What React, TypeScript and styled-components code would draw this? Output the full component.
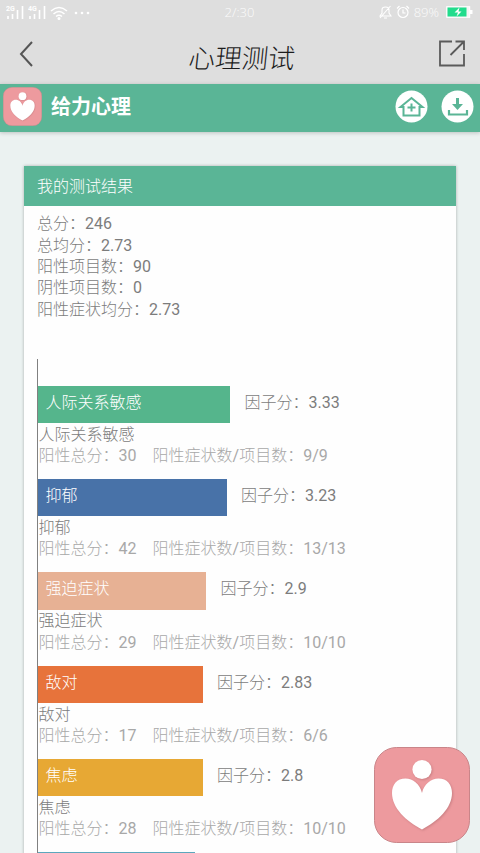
import React from "react";
import styled, { createGlobalStyle } from "styled-components";

const GlobalStyle = createGlobalStyle`
  * { box-sizing: border-box; }
  html, body { margin: 0; padding: 0; overflow: hidden; }
  body { font-family: Roboto, "Noto Sans CJK SC", sans-serif; font-size: 16px; line-height: 21.33px; color: #7c7c7c; font-weight: 300; }
`;

const Screen = styled.div`
  width: 480px;
  height: 853px;
  overflow: hidden;
  position: relative;
  background: #ebf2f1;
  display: flex;
  flex-direction: column;
`;

const StatusBar = styled.div`
  height: 25px;
  flex: none;
  display: grid;
  grid-template-columns: 1fr auto 1fr;
  align-items: center;
  padding: 0 7px 0 6px;
  background: #dedede;
  color: #fbfbfb;
`;

const StatusGroup = styled.div<{ $end?: boolean }>`
  display: flex;
  align-items: center;
  justify-content: ${(p) => (p.$end ? "flex-end" : "flex-start")};
  gap: 4px;
`;

const StatusText = styled.span<{ $gap?: number }>`
  font-family: "Open Sans", sans-serif;
  font-weight: 300;
  font-size: 13px;
  margin-right: ${(p) => p.$gap ?? 0}px;
`;

const TitleBar = styled.header`
  height: 58.5px;
  flex: none;
  display: flex;
  align-items: center;
  justify-content: space-between;
  padding: 0 14px 0 18px;
  background: #dedede;
`;

const Title = styled.h1`
  margin: 5px 0 0 11px;
  font-family: "Noto Sans CJK SC", sans-serif;
  font-size: 26.5px;
  line-height: 32px;
  font-weight: 300;
  color: #1c1c1c;
  transform: skewX(-6deg);
`;

const BrandBar = styled.div`
  height: 48px;
  flex: none;
  display: flex;
  align-items: center;
  padding: 0 6.5px 1.5px 3px;
  background: #5ab596;
  box-shadow: 0 1px 4px rgba(0, 0, 0, 0.2);
`;

const BrandName = styled.div`
  flex: 1;
  margin: 2px 0 0 9px;
  font-size: 20px;
  font-weight: 700;
  color: #fff;
`;

const Actions = styled.div`
  display: flex;
  gap: 13px;
`;

const Card = styled.main`
  flex: none;
  width: 432px;
  height: 740px;
  margin: 34.5px 0 0 24px;
  background: #fefefe;
  box-shadow: 0 0 3px rgba(0, 0, 0, 0.28);
`;

const CardTitle = styled.div`
  height: 40px;
  padding: 10px 13px;
  background: #5ab596;
  color: #fff;
`;

const Summary = styled.div`
  padding: 7.2px 13px 0;
`;

const Num = styled.span`
  font-weight: 400;
`;

const Chart = styled.section`
  margin: 39.3px 13px 0;
  padding-top: 26.5px;
  border-left: 1.4px solid #808080;
  height: 520px;
`;

const Factor = styled.article`
  height: 93.33px;
`;

const BarRow = styled.div`
  display: flex;
  height: 37.33px;
  line-height: 33.6px;
`;

const Bar = styled.div<{ $width: number; $color: string }>`
  width: ${(p) => p.$width}px;
  background: ${(p) => p.$color};
  padding-left: 7.5px;
  margin-right: 14.5px;
  color: #fff;
`;

const FactorName = styled.div`
  padding: 0.8px 0 0 0.6px;
`;

const Detail = styled.div`
  display: flex;
  gap: 16px;
  padding-left: 0.6px;
  color: #a8a8a8;
`;

const FloatingLogo = styled.div`
  position: absolute;
  left: 374px;
  top: 747px;
  width: 96px;
  height: 96px;
`;

const Drawing = styled.svg`
  display: block;
  flex: none;
`;

const LogoMark = styled.g`
  fill: #fff;
  filter: drop-shadow(1px 1px 1px rgba(168, 101, 105, 0.5));
`;

function Logo({ size }: { size: number }) {
  return (
    <Drawing width={size} height={size} viewBox="0 0 96 96">
      <rect x=".5" y=".5" width="95" height="95" rx="22" fill="#ed9a9e" stroke="#c98589" />
      <LogoMark>
        <circle cx="48" cy="22.5" r="9.6" />
        <path d="M48 46C46 37 39 31.5 31.5 31.5C23 31.5 18 37.5 18 46C18 61 32 74 48 82.5C64 74 78 61 78 46C78 37.5 73 31.5 64.5 31.5C57 31.5 50 37 48 46Z" />
      </LogoMark>
    </Drawing>
  );
}

function Signal({ label }: { label: string }) {
  return (
    <Drawing width="18" height="15" viewBox="0 0 18 15">
      <text x="0" y="6" fontSize="7" fontWeight="700" fontFamily="Roboto" fill="#fff">{label}</text>
      <path d="M2 11V14M6.5 9V14M11.5 5V14M16.500 1V14" stroke="#fff" strokeWidth="1.600" />
    </Drawing>
  );
}

const summary = [
  { label: "总分", value: "246" },
  { label: "总均分", value: "2.73" },
  { label: "阳性项目数", value: "90" },
  { label: "阴性项目数", value: "0" },
  { label: "阳性症状均分", value: "2.73" },
];

const factors = [
  { name: "人际关系敏感", width: 192, color: "#55b58c", score: "3.33", total: 30, ratio: "9/9" },
  { name: "抑郁", width: 188.5, color: "#4872a8", score: "3.23", total: 42, ratio: "13/13" },
  { name: "强迫症状", width: 168, color: "#e7b194", score: "2.9", total: 29, ratio: "10/10" },
  { name: "敌对", width: 164.5, color: "#e7733b", score: "2.83", total: 17, ratio: "6/6" },
  { name: "焦虑", width: 164.5, color: "#e7a834", score: "2.8", total: 28, ratio: "10/10" },
];

export default function App() {
  return (
    <Screen lang="zh-CN">
      <GlobalStyle />
      <StatusBar>
        <StatusGroup>
          <Signal label="2G" />
          <Signal label="4G" />
          <Drawing width="18" height="14" viewBox="0 0 18 14" fill="none" stroke="#fff" strokeWidth="1.5">
            <path d="M1 5Q9 -2 17 5M3.5 8Q9 3 14.5 8M6 10.5Q9 8 12 10.5" />
            <circle cx="9" cy="12.5" r=".8" />
          </Drawing>
          <Drawing width="18" height="4" viewBox="0 0 18 4" fill="#fff">
            <circle cx="4" cy="2" r="1.300" /><circle cx="10" cy="2" r="1.300" /><circle cx="16" cy="2" r="1.300" />
          </Drawing>
        </StatusGroup>
        <StatusText>2/:30</StatusText>
        <StatusGroup $end>
          <Drawing width="13" height="14" viewBox="0 0 13 14" fill="none" stroke="#fff" strokeWidth="1.1">
            <path d="M1 11H12L10 8V5Q10 2 6.5 2Q3 2 3 5V8ZM5 13H8M11.5 1L1 13" />
          </Drawing>
          <Drawing width="14" height="14" viewBox="0 0 14 14" fill="none" stroke="#fff" strokeWidth="1.2">
            <circle cx="7" cy="7.5" r="5" /><path d="M7 4.5V8H9.5M1 3.5L3.5 1M10.5 1L13 3.5" />
          </Drawing>
          <StatusText $gap={3}>89%</StatusText>
          <Drawing width="27" height="12" viewBox="0 0 27 12">
            <rect x=".7" y=".7" width="23" height="10.6" fill="#f5f5f5" stroke="#fff" />
            <rect x="1.5" y="1.5" width="19" height="9" fill="#21dc8c" />
            <path d="M24 4H26.5V8H24Z" fill="#fff" />
            <path d="M13.5 1.5L8.5 6.5H12L10.5 10.5L15.5 5.5H12.5Z" fill="#fff" />
          </Drawing>
        </StatusGroup>
      </StatusBar>
      <TitleBar>
        <Drawing width="16" height="26" viewBox="0 0 16 26" fill="none" stroke="#555" strokeWidth="2">
          <path d="M14 1L3 13L14 25" />
        </Drawing>
        <Title>心理测试</Title>
        <Drawing width="28" height="28" viewBox="0 0 28 28" fill="none" stroke="#5a5a5a" strokeWidth="1.8">
          <path d="M14 1.500H2V25.500H26V14M17.500 1.500H26V10M12.500 15L26 1.500" />
        </Drawing>
      </TitleBar>
      <BrandBar>
        <Logo size={39} />
        <BrandName>给力心理</BrandName>
        <Actions>
          <Drawing width="33" height="33" viewBox="0 0 33 33" fill="none" stroke="#5ab596" strokeWidth="2">
            <circle cx="16.5" cy="16.5" r="16" fill="#fff" stroke="none" />
            <path d="M5.5 17L16.5 8L27.5 17H24.5V25.500H8.500V17ZM16.500 13.500V21.500M12.500 17.500H20.500" />
          </Drawing>
          <Drawing width="33" height="33" viewBox="0 0 33 33" fill="none" stroke="#5ab596" strokeWidth="2.2">
            <circle cx="16.5" cy="16.5" r="16" fill="#fff" stroke="none" />
            <path d="M8 20V24.500H26V20" />
            <path d="M16.5 8V16" strokeWidth="3" />
            <path d="M11 14H22L16.5 20Z" fill="#5ab596" stroke="none" />
          </Drawing>
        </Actions>
      </BrandBar>
      <Card>
        <CardTitle>我的测试结果</CardTitle>
        <Summary>
          {summary.map((s) => (
            <div key={s.label}>{s.label}：<Num>{s.value}</Num></div>
          ))}
        </Summary>
        <Chart>
          {factors.map((f) => (
            <Factor key={f.name}>
              <BarRow>
                <Bar $width={f.width} $color={f.color}>{f.name}</Bar>
                <span>因子分：<Num>{f.score}</Num></span>
              </BarRow>
              <FactorName>{f.name}</FactorName>
              <Detail>
                <span>阳性总分：<Num>{f.total}</Num></span>
                <span>阳性症状数<Num>/</Num>项目数：<Num>{f.ratio}</Num></span>
              </Detail>
            </Factor>
          ))}
          <BarRow>
            <Bar $width={157} $color="#5ba7bd" />
          </BarRow>
        </Chart>
      </Card>
      <FloatingLogo><Logo size={96} /></FloatingLogo>
    </Screen>
  );
}
